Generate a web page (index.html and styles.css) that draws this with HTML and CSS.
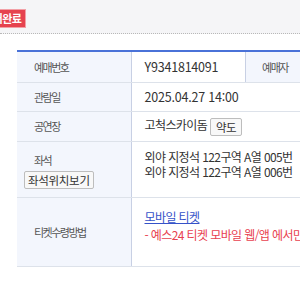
FILE: index.html
```html
<!DOCTYPE html>
<html lang="ko">
<head>
<meta charset="utf-8">
<link rel="stylesheet" href="styles.css">
</head>
<body>
<div class="top">
  <span class="badge">예매완료</span>
</div>
<div class="content">
  <table class="info">
    <colgroup>
      <col class="c-th"><col class="c-td"><col class="c-th2"><col class="c-td2">
    </colgroup>
    <tr class="r1">
      <th>예매번호</th>
      <td class="num">Y9341814091</td>
      <th class="th2">예매자</th>
      <td></td>
    </tr>
    <tr class="r2">
      <th>관람일</th>
      <td class="num" colspan="3">2025.04.27 14:00</td>
    </tr>
    <tr class="r3">
      <th>공연장</th>
      <td colspan="3">고척스카이돔 <span class="btn">약도</span></td>
    </tr>
    <tr class="r4">
      <th><div>좌석</div><span class="btn btn-seat">좌석위치보기</span></th>
      <td class="top-al" colspan="3">외야 지정석 122구역 A열 005번<br>외야 지정석 122구역 A열 006번</td>
    </tr>
    <tr class="r5">
      <th>티켓수령방법</th>
      <td class="top-al recv" colspan="3"><a class="link">모바일 티켓</a><div class="warn">- 예스24 티켓 모바일 웹/앱 에서만 확인 가능합니다.</div></td>
    </tr>
  </table>
</div>
</body>
</html>
```

FILE: styles.css
```css
html, body {
  margin: 0;
  padding: 0;
  overflow: hidden;
  background: #fff;
  font-family: "Noto Sans CJK KR", "Noto Sans", sans-serif;
}
.top {
  height: 34px;
  background: #f5f5f7;
  border-bottom: 1px dotted #b8b8b8;
  padding-top: 4px;
  box-sizing: border-box;
}
.badge {
  display: inline-block;
  margin-left: -22px;
  height: 17px;
  line-height: 17px;
  padding: 0 4px;
  background: #e6434f;
  color: #fff;
  font-size: 11px;
  font-weight: bold;
  letter-spacing: -0.5px;
  border: 1px solid #f2a0a6;
}
.content {
  padding: 16px 0 0 17px;
}
.info {
  border-collapse: collapse;
  table-layout: fixed;
  width: 440px;
  border-top: 2px solid #4a72d8;
  border-bottom: 1px solid #cfd3d9;
}
.c-th { width: 114px; }
.c-td { width: 114px; }
.c-th2 { width: 60px; }
.info th {
  background: #f3f6fd;
  color: #555;
  font-weight: normal;
  font-size: 11px;
  letter-spacing: -1.5px;
  text-align: left;
  padding: 0 0 0 17px;
  border-right: 1px solid #c8d0e4;
  border-bottom: 1px solid #dde2ea;
  vertical-align: middle;
}
.info th.th2 {
  text-align: center;
  padding: 0;
  border-left: 1px solid #c8d0e4;
}
.info td {
  color: #333;
  font-size: 12px;
  letter-spacing: -0.6px;
  padding: 0 0 0 13px;
  border-bottom: 1px solid #dde2ea;
  vertical-align: middle;
  white-space: nowrap;
}
.info td.num { font-size: 12.5px; letter-spacing: -0.2px; }
.r1 { height: 31px; }
.r2 { height: 29px; }
.r3 { height: 30px; }
.r4 { height: 56px; }
.r5 { height: 69px; }
.info td.top-al {
  vertical-align: top;
  padding-top: 7px;
  line-height: 15px;
}
.info td.recv { padding-top: 10px; line-height: 18px; }
.btn {
  display: inline-block;
  height: 18px;
  line-height: 17px;
  padding: 0 5px;
  border: 1px solid #bdbdbd;
  border-radius: 2px;
  background: #f8f8f8;
  color: #333;
  font-size: 11.5px;
  letter-spacing: -0.5px;
  vertical-align: middle;
  box-sizing: border-box;
}
.btn-seat {
  margin: 3px 0 0 -10px;
  letter-spacing: -0.3px;
  font-size: 11.5px;
  padding: 0 3px;
}
.r4 th div { padding-top: 2px; }
.link {
  color: #3552c8;
  text-decoration: underline;
}
.warn {
  color: #e8414f;
}
```
